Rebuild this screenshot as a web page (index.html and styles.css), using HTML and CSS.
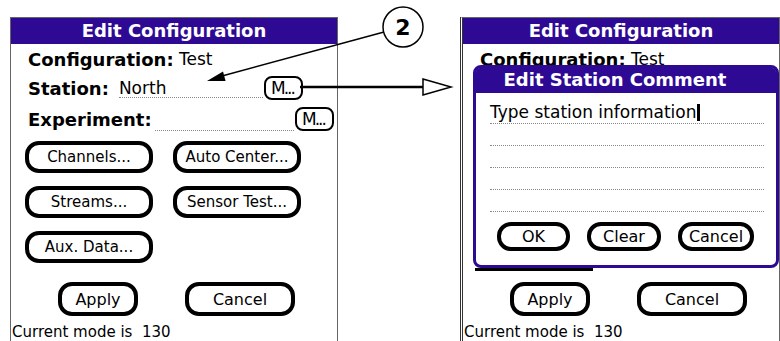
FILE: index.html
```html
<!DOCTYPE html>
<html lang="en">
<head>
    <meta charset="UTF-8">
    <meta name="viewport" content="width=device-width, initial-scale=1.0">
    <title>Edit Configuration</title>
    <link rel="stylesheet" href="styles.css">
</head>
<body>
    <div class="page">
        <div class="screen screen-left">
            <div class="title-bar">Edit Configuration</div>
            <div class="row row-config"><b>Configuration:</b>&nbsp;Test</div>
            <div class="row row-station">
                <b>Station:</b>
                <span class="field">North</span>
                <span class="small-btn">M...</span>
            </div>
            <div class="row row-experiment">
                <b>Experiment:</b>
                <span class="field"></span>
                <span class="small-btn">M...</span>
            </div>
            <div class="btn-grid">
                <span class="btn">Channels...</span>
                <span class="btn">Auto Center...</span>
                <span class="btn">Streams...</span>
                <span class="btn">Sensor Test...</span>
                <span class="btn">Aux. Data...</span>
            </div>
            <div class="btn-row">
                <span class="btn btn-apply">Apply</span>
                <span class="btn btn-cancel">Cancel</span>
            </div>
            <div class="status">Current mode is&nbsp; 130</div>
        </div>

        <div class="screen screen-right">
            <div class="title-bar">Edit Configuration</div>
            <div class="row row-config"><b>Configuration:</b>&nbsp;Test</div>
            <!-- rows under the dialog are kept for layout but not shown -->
            <div class="row row-station covered">
                <b>Station:</b>
                <span class="field">North</span>
                <span class="small-btn">M...</span>
            </div>
            <div class="row row-experiment covered">
                <b>Experiment:</b>
                <span class="field"></span>
                <span class="small-btn">M...</span>
            </div>
            <div class="btn-grid covered">
                <span class="btn">Channels...</span>
                <span class="btn">Auto Center...</span>
                <span class="btn">Streams...</span>
                <span class="btn">Sensor Test...</span>
                <span class="btn">Aux. Data...</span>
            </div>
            <div class="btn-row">
                <span class="btn btn-apply">Apply</span>
                <span class="btn btn-cancel">Cancel</span>
            </div>
            <div class="status">Current mode is&nbsp; 130</div>

            <div class="dialog">
                <div class="dialog-title">Edit Station Comment</div>
                <div class="dialog-body">
                    <div class="note-line">Type station information<span class="cursor"></span></div>
                    <div class="note-line"></div>
                    <div class="note-line"></div>
                    <div class="note-line"></div>
                    <div class="note-line"></div>
                    <div class="dialog-buttons">
                        <span class="btn btn-ok">OK</span>
                        <span class="btn btn-clear">Clear</span>
                        <span class="btn btn-dlg-cancel">Cancel</span>
                    </div>
                </div>
            </div>
        </div>
    </div>

    <svg class="callout" width="780" height="341" viewBox="0 0 780 341">
        <line x1="384" y1="32" x2="222" y2="76" stroke="#000" stroke-width="1.5"/>
        <polygon points="207,81 225.6,81 223,71.4" fill="#000"/>
        <circle cx="403" cy="27" r="20" fill="#fff" stroke="#000" stroke-width="1.5"/>
        <text class="callout-num" x="403" y="35" text-anchor="middle">2</text>
        <line x1="300" y1="87" x2="423" y2="87" stroke="#000" stroke-width="2.5"/>
        <polygon points="423,79 451,87 423,95" fill="#fff" stroke="#000" stroke-width="1.5"/>
    </svg>
</body>
</html>
```

FILE: styles.css
```css
body {
    margin: 0;
    height: 341px;
    overflow: hidden;
    position: relative;
    background-color: #fff;
    color: #000;
    font-family: "DejaVu Sans", sans-serif;
}

.page {
    display: flex;
    gap: 122px;
    padding: 17px 0 0 10px;
}

.screen {
    position: relative;
    box-sizing: border-box;
    height: 340px;
    border: 1px solid #666;
    border-bottom: none;
}

.screen-left {
    width: 328px;
}

.screen-right {
    width: 320px;
    border-left: 3px double #333;
}

.covered {
    visibility: hidden;
}

.title-bar {
    height: 26px;
    line-height: 26px;
    background-color: #2e0a94;
    color: #fff;
    font-size: 18px;
    font-weight: bold;
    text-align: center;
}

.row {
    display: flex;
    align-items: center;
    padding-left: 17px;
    font-size: 17px;
    white-space: nowrap;
}

.row b {
    font-size: 18px;
}

.row-config {
    height: 30px;
}

.row-station {
    height: 28px;
    padding-right: 34px;
}

.row-experiment {
    height: 34px;
    padding-right: 3px;
}

.field {
    flex: 1;
    box-sizing: border-box;
    height: 20px;
    line-height: 20px;
    margin: 0 1px 0 10px;
    border-bottom: 1px dotted #888;
}

.row-experiment .field {
    height: 24px;
    margin-left: 3px;
}

.small-btn {
    box-sizing: border-box;
    width: 39px;
    height: 24px;
    border: 2px solid #000;
    border-radius: 8px;
    font-size: 17px;
    letter-spacing: -2px;
    display: flex;
    align-items: center;
    justify-content: center;
    padding-right: 2px;
}

.btn {
    box-sizing: border-box;
    border: 4px solid #000;
    border-radius: 14px;
    font-size: 15px;
    display: flex;
    align-items: center;
    justify-content: center;
    white-space: nowrap;
    background-color: #fff;
}

.btn-grid {
    display: grid;
    grid-template-columns: 128px 128px;
    grid-auto-rows: 32px;
    column-gap: 20px;
    row-gap: 13px;
    margin-top: 5px;
    padding-left: 14px;
}

.btn-row {
    display: flex;
    gap: 47px;
    margin-top: 19px;
    padding-left: 47px;
}

.btn-row .btn {
    height: 34px;
    font-size: 16px;
}

.btn-apply {
    width: 80px;
}

.btn-cancel {
    width: 110px;
}

.status {
    margin-top: 6px;
    padding-left: 1px;
    font-size: 15px;
    line-height: 20px;
}

.dialog {
    position: absolute;
    top: 47px;
    left: 10px;
    box-sizing: border-box;
    width: 306px;
    height: 203px;
    border: 3px solid #2e0a94;
    border-radius: 8px;
    background-color: #fff;
}

.dialog::after {
    content: "";
    position: absolute;
    left: -1px;
    bottom: -6px;
    width: 118px;
    height: 3px;
    background-color: #000;
}

.dialog-title {
    height: 25px;
    line-height: 24px;
    padding-right: 22px;
    border-radius: 4px 4px 0 0;
    background-color: #2e0a94;
    color: #fff;
    font-size: 18px;
    font-weight: bold;
    text-align: center;
}

.dialog-body {
    padding: 9px 12px 0 14px;
}

.note-line {
    box-sizing: border-box;
    height: 22px;
    line-height: 21px;
    border-bottom: 1px dotted #888;
    font-size: 17px;
    white-space: nowrap;
}

.cursor {
    display: inline-block;
    width: 3px;
    height: 17px;
    margin-left: 1px;
    background-color: #000;
    vertical-align: -3px;
}

.dialog-buttons {
    display: flex;
    gap: 17px;
    margin-top: 10px;
    padding-left: 7px;
}

.dialog-buttons .btn {
    height: 29px;
    font-size: 16px;
}

.btn-ok {
    width: 73px;
}

.btn-clear {
    width: 74px;
}

.btn-dlg-cancel {
    width: 76px;
}

.callout {
    position: absolute;
    top: 0;
    left: 0;
    pointer-events: none;
}

.callout-num {
    font-family: "DejaVu Sans", sans-serif;
    font-size: 22px;
    font-weight: bold;
}
```
